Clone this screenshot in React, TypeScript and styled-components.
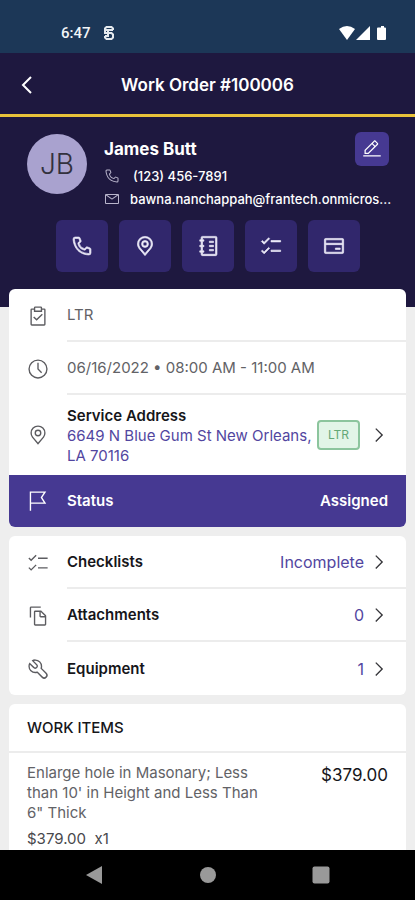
import React, { ReactNode } from "react";
import styled, { createGlobalStyle, css } from "styled-components";

const GlobalStyle = createGlobalStyle`
  *, *::before, *::after { box-sizing: border-box; }
  body {
    margin: 0;
    background: #eeeeee;
    font-family: Inter, "Liberation Sans", sans-serif;
    color: #16161a;
  }
  button { font: inherit; color: inherit; border: 0; padding: 0; background: none; cursor: pointer; }
  h1, h2, h3, p { margin: 0; }
`;

const ICONS = {
  phone: [
    "M26,29h-.17C6.18,27.87,3.39,11.29,3,6.23A3,3,0,0,1,5.76,3h5.51a2,2,0,0,1,1.86,1.26L14.65,8a2,2,0,0,1-.44,2.16l-2.13,2.15a9.37,9.37,0,0,0,7.58,7.6l2.17-2.15A2,2,0,0,1,24,17.35l3.77,1.51A2,2,0,0,1,29,20.72V26A3,3,0,0,1,26,29ZM6,5A1,1,0,0,0,5,6v.08C5.46,12,8.41,26,25.94,27A1,1,0,0,0,27,26.06V20.72l-3.77-1.51-2.87,2.85L19.88,22C11.18,20.91,10,12.21,10,12.12l-.06-.48,2.84-2.87L11.28,5Z",
  ],
  email: [
    "M28,6H4A2,2,0,0,0,2,8V24a2,2,0,0,0,2,2H28a2,2,0,0,0,2-2V8A2,2,0,0,0,28,6ZM25.8,8,16,14.78,6.2,8ZM4,24V8.91l11.43,7.91a1,1,0,0,0,1.14,0L28,8.91V24Z",
  ],
  edit: [
    "M2 26H30V28H2z",
    "M25.4,9c.8-.8.8-2,0-2.8l-3.6-3.6c-.8-.8-2-.8-2.8,0l-15,15V24h6.4L25.4,9zM20.4,4L24,7.6l-3,3L17.4,7L20.4,4zM6,22v-3.6l10-10l3.6,3.6l-10,10H6z",
  ],
  location: [
    "M16,18a5,5,0,1,1,5-5A5,5,0,0,1,16,18Zm0-8a3,3,0,1,0,3,3A3,3,0,0,0,16,10Z",
    "M16,30,7.5645,20.0513c-.0479-.0571-.3482-.4515-.3482-.4515A10.8888,10.8888,0,0,1,5,13a11,11,0,0,1,22,0,10.8844,10.8844,0,0,1-2.2148,6.5973l-.0015.0025s-.3.3944-.3447.4474ZM8.8125,18.395c.001.0007.2334.3082.2866.3744L16,26.9079l6.91-8.15c.0439-.0552.2783-.3649.2788-.3657A8.901,8.901,0,0,0,25,13,9,9,0,1,0,7,13a8.9054,8.9054,0,0,0,1.8125,5.395Z",
  ],
  notebook: [
    "M18 9H24V11H18zM18 15H24V17H18zM18 21H24V23H18z",
    "M27,2H8A2,2,0,0,0,6,4V7H4V9H6v6H4v2H6v6H4v2H6v3a2,2,0,0,0,2,2H27a2,2,0,0,0,2-2V4A2,2,0,0,0,27,2Zm0,26H8V25h2V23H8V17h2V15H8V9h2V7H8V4H27Z",
  ],
  checklist: [
    "M16 8h14v2H16zM6 10.59 3.41 8 2 9.41 6 13.41 14 5.41 12.59 4zM16 22h14v2H16zM6 24.59 3.41 22 2 23.41 6 27.41 14 19.41 12.59 18z",
  ],
  card: [
    "M28,5H4A2,2,0,0,0,2,7V25a2,2,0,0,0,2,2H28a2,2,0,0,0,2-2V7A2,2,0,0,0,28,5Zm0,2v5H4V7ZM4,25V14H28V25Z",
    "M18 19h7v2H18z",
  ],
  task: [
    "M14 20.18 10.41 16.59 9 18 14 23 23 14 21.59 12.58z",
    "M25,5H22V4a2,2,0,0,0-2-2H12a2,2,0,0,0-2,2V5H7A2,2,0,0,0,5,7V28a2,2,0,0,0,2,2H25a2,2,0,0,0,2-2V7A2,2,0,0,0,25,5ZM12,4h8V8H12ZM25,28H7V7h3v3H22V7h3Z",
  ],
  time: [
    "M16,30A14,14,0,1,1,30,16,14,14,0,0,1,16,30ZM16,4A12,12,0,1,0,28,16,12,12,0,0,0,16,4Z",
    "M20.59 22 15 16.41 15 7 17 7 17 15.58 22 20.59z",
  ],
  flag: ["M6,30H4V2H28l-5.8,9L28,20H6ZM6,18H24.33L19.8,11l4.53-7H6Z"],
  files: [
    "M27.4,14.7l-6.1-6.1C21,8.2,20.5,8,20,8h-8c-1.1,0-2,.9-2,2v18c0,1.1.9,2,2,2h14c1.1,0,2-.9,2-2V16.1C28,15.6,27.8,15.1,27.4,14.7zM20,10l5.9,6H20V10zM12,28V10h6v6c0,1.1.9,2,2,2h6v10H12z",
    "M6,18H4V4c0-1.1.9-2,2-2h14v2H6V18z",
  ],
  wrench: [
    "M12.1,2a9.8,9.8,0,0,0-5.4,1.6l6.4,6.4a2.1,2.1,0,0,1,.2,3,2.1,2.1,0,0,1-3-.2L3.7,6.4A9.84,9.84,0,0,0,2,12.1,10.14,10.14,0,0,0,12.1,22.2a10.9,10.9,0,0,0,2.6-.3l6.7,6.7a5,5,0,0,0,7.1-7.1l-6.7-6.7a10.9,10.9,0,0,0,.3-2.6A10,10,0,0,0,12.1,2Zm8,10.1a7.61,7.61,0,0,1-.3,2.1l-.3,1.1.8.8,6.7,6.7a2.88,2.88,0,0,1,.9,2.1A2.72,2.72,0,0,1,27,27a2.9,2.9,0,0,1-4.2,0l-6.7-6.7-.8-.8-1.1.3a7.61,7.61,0,0,1-2.1.3,8.27,8.27,0,0,1-5.7-2.3A7.63,7.63,0,0,1,4,12.1a8.33,8.33,0,0,1,.3-2.2l4.4,4.4a4.14,4.14,0,0,0,5.9.2,4.14,4.14,0,0,0-.2-5.9L10,4.2a6.45,6.45,0,0,1,2-.3,8.27,8.27,0,0,1,5.7,2.3A8.49,8.49,0,0,1,20.1,12.1Z",
  ],
  chevron: ["M22 16 12 26 10.6 24.6 19.2 16 10.6 7.4 12 6z"],
};

type IconName = keyof typeof ICONS;

const Glyph = styled.svg<{ $size: number; $bold?: boolean }>`
  display: block;
  flex: none;
  width: ${(p) => p.$size}px;
  height: ${(p) => p.$size}px;
  fill: currentColor;
  ${(p) => p.$bold && css`stroke: currentColor; stroke-width: 1;`}
`;

const Icon = ({ name, size = 22, bold }: { name: IconName; size?: number; bold?: boolean }) => (
  <Glyph $size={size} $bold={bold} viewBox="0 0 32 32" aria-hidden="true">
    {ICONS[name].map((d) => (
      <path key={d} d={d} />
    ))}
  </Glyph>
);

const Screen = styled.div`
  display: flex;
  flex-direction: column;
  height: 100vh;
  overflow: hidden;
`;

const StatusBar = styled.div`
  flex: none;
  display: flex;
  align-items: center;
  gap: 12px;
  height: 53px;
  padding: 12px 27px 0 61px;
  background: #1c3757;
  color: #f2f5f8;
  font: 500 15px/20px Roboto, sans-serif;
`;

const SystemIcons = styled.svg`
  display: block;
  width: 49px;
  height: 16px;
  margin-left: auto;
  fill: #fff;
`;

const DebugMark = styled.svg`
  display: block;
  width: 12px;
  height: 16px;
  fill: none;
  stroke: #e4e9ee;
  stroke-width: 2;
`;

const TitleBar = styled.header`
  flex: none;
  display: grid;
  grid-template-columns: 56px 1fr 56px;
  align-items: center;
  height: 64px;
  padding-top: 3px;
  background: #1e183f;
  border-bottom: 3px solid #e8c23a;
  color: #fff;
`;

const BackButton = styled.button`
  display: flex;
  justify-content: center;
  padding-right: 3px;
  svg { width: 12px; height: 18px; fill: none; stroke: currentColor; stroke-width: 2; }
`;

const Title = styled.h1`
  font-size: 17px;
  line-height: 24px;
  font-weight: 600;
  text-align: center;
`;

const Content = styled.main`
  flex: 1;
  min-height: 0;
  overflow: hidden;
`;

const Hero = styled.section`
  padding: 17px 26px 35px 27px;
  background: #1e183f;
  color: #fff;
`;

const Contact = styled.div`
  display: grid;
  grid-template-columns: 60px 1fr;
  column-gap: 17px;
`;

const Avatar = styled.div`
  display: grid;
  place-items: center;
  width: 60px;
  height: 60px;
  border-radius: 50%;
  background: #a9a2cf;
  color: #33313d;
  font-size: 28px;
  font-weight: 300;
`;

const ContactInfo = styled.div`
  min-width: 0;
`;

const NameRow = styled.div`
  display: flex;
  justify-content: space-between;
  align-items: center;
  height: 30px;
`;

const Name = styled.h2`
  font-size: 17px;
  line-height: 24px;
  font-weight: 700;
`;

const EditButton = styled.button`
  display: grid;
  place-items: center;
  width: 34px;
  height: 34px;
  border-radius: 6px;
  background: #463992;
`;

const ContactLine = styled.div<{ $gap: number }>`
  display: grid;
  grid-template-columns: 16px 1fr;
  align-items: center;
  column-gap: ${(p) => p.$gap}px;
  height: 23px;
  font-size: 13px;
  line-height: 20px;
  font-weight: 500;
  svg { color: #b9b5cc; }
`;

const ContactText = styled.span`
  white-space: nowrap;
`;

const Actions = styled.div`
  display: flex;
  justify-content: center;
  gap: 11px;
  margin-top: 10px;
`;

const ActionButton = styled.button`
  display: grid;
  place-items: center;
  width: 52px;
  height: 52px;
  border-radius: 6px;
  background: #31276c;
  color: #eceaf8;
`;

const Cards = styled.div`
  display: flex;
  flex-direction: column;
  gap: 9px;
  margin-top: -18px;
  padding: 0 9px;
`;

const Card = styled.section`
  border-radius: 6px;
  background: #fff;
  overflow: hidden;
`;

const Row = styled.div<{ $tall?: boolean; $status?: boolean }>`
  display: grid;
  grid-template-columns: 58px 1fr;
  align-items: center;
  height: ${(p) => (p.$tall ? 80 : 53)}px;
  color: #16161a;
  ${(p) => p.$status && css`
    height: 52px;
    background: #463992;
    color: #fff;
  `}
`;

const RowIcon = styled.span<{ $light?: boolean }>`
  padding-left: 18px;
  color: ${(p) => (p.$light ? "#fff" : "#5c5c60")};
`;

const RowBody = styled.div<{ $divided?: boolean }>`
  display: flex;
  align-items: center;
  height: 100%;
  padding-right: 18px;
  border-bottom: ${(p) => (p.$divided ? "2px solid #ececec" : "0")};
`;

const RowText = styled.span`
  font-size: 15px;
  line-height: 20px;
  color: #626266;
`;

const RowLabel = styled.span`
  flex: 1;
  font-size: 15px;
  line-height: 20px;
  font-weight: 600;
`;

const RowValue = styled.span`
  font-size: 16px;
  line-height: 20px;
  color: #5246a0;
`;

const StatusValue = styled.span`
  font-size: 15px;
  line-height: 20px;
  font-weight: 600;
`;

const ChevronButton = styled.button`
  margin-right: -2px;
  padding-left: 4px;
  color: #38383c;
`;

const Address = styled.div`
  flex: 1;
  min-width: 0;
  white-space: nowrap;
`;

const AddressLine = styled.p`
  font-size: 15px;
  line-height: 20px;
  color: #5246a0;
`;

const Tag = styled.span`
  flex: none;
  margin-right: 4px;
  padding: 3px 9px;
  border: 2px solid #8cc59d;
  border-radius: 4px;
  background: #e2f5e7;
  color: #64a877;
  font-size: 12px;
  line-height: 20px;
`;

const CardTitle = styled.h3`
  padding: 14px 18px 13px;
  border-bottom: 2px solid #ececec;
  font-size: 15px;
  line-height: 20px;
  font-weight: 500;
`;

const WorkItem = styled.div`
  display: flex;
  justify-content: space-between;
  padding: 10px 18px;
`;

const ItemDetails = styled.div`
  width: 250px;
  font-size: 15px;
  line-height: 20px;
  color: #626266;
`;

const ItemQuantity = styled.p`
  margin-top: 6px;
  color: #48484c;
  white-space: pre;
`;

const ItemTotal = styled.span`
  font-size: 17px;
  line-height: 24px;
`;

const NavBar = styled.nav`
  flex: none;
  display: flex;
  justify-content: space-between;
  align-items: center;
  height: 50px;
  padding: 0 85px;
  background: #000;
  svg { display: block; width: 18px; height: 18px; fill: #999; }
`;

const actions: { name: IconName; label: string }[] = [
  { name: "phone", label: "Call" },
  { name: "location", label: "Map" },
  { name: "notebook", label: "Notes" },
  { name: "checklist", label: "Checklists" },
  { name: "card", label: "Payment" },
];

const links: { icon: IconName; label: string; value: string }[] = [
  { icon: "checklist", label: "Checklists", value: "Incomplete" },
  { icon: "files", label: "Attachments", value: "0" },
  { icon: "wrench", label: "Equipment", value: "1" },
];

const InfoRow = ({ icon, divided, tall, children }: { icon: IconName; divided?: boolean; tall?: boolean; children: ReactNode }) => (
  <Row $tall={tall}>
    <RowIcon><Icon name={icon} /></RowIcon>
    <RowBody $divided={divided}>{children}</RowBody>
  </Row>
);

export default function App() {
  return (
    <>
      <GlobalStyle />
      <Screen>
        <StatusBar>
          <span>6:47</span>
          <DebugMark viewBox="0 0 12 16" aria-hidden="true">
            <path d="M10 5V3.5L8.5 2H3.5L2 3.5V8H8.5L10 9.5V12.5L8.5 14H3.500L2 12.500V11M2 5H10M5 5V11H2" />
          </DebugMark>
          <SystemIcons viewBox="0 0 49 16" aria-hidden="true">
            <path d="M0 4Q8 -2 16 4L8 15z" />
            <path d="M31 1V15H17z" />
            <path d="M40 2.500H42V1H45V2.500H46Q47 2.500 47 3.500V14Q47 15 46 15H39Q38 15 38 14V3.500Q38 2.500 39 2.500z" />
          </SystemIcons>
        </StatusBar>
        <TitleBar>
          <BackButton aria-label="Back">
            <svg viewBox="0 0 12 18" aria-hidden="true"><path d="M10 1 2 9l8 8" /></svg>
          </BackButton>
          <Title>Work Order #100006</Title>
        </TitleBar>
        <Content>
          <Hero>
            <Contact>
              <Avatar>JB</Avatar>
              <ContactInfo>
                <NameRow>
                  <Name>James Butt</Name>
                  <EditButton aria-label="Edit"><Icon name="edit" size={20} /></EditButton>
                </NameRow>
                <ContactLine $gap={13}>
                  <Icon name="phone" size={16} />
                  <ContactText>(123) 456-7891</ContactText>
                </ContactLine>
                <ContactLine $gap={10}>
                  <Icon name="email" size={16} />
                  <ContactText>bawna.nanchappah@frantech.onmicros...</ContactText>
                </ContactLine>
              </ContactInfo>
            </Contact>
            <Actions>
              {actions.map((a) => (
                <ActionButton key={a.name} aria-label={a.label}>
                  <Icon name={a.name} bold />
                </ActionButton>
              ))}
            </Actions>
          </Hero>
          <Cards>
            <Card>
              <InfoRow icon="task" divided><RowText>LTR</RowText></InfoRow>
              <InfoRow icon="time" divided><RowText>06/16/2022 • 08:00 AM - 11:00 AM</RowText></InfoRow>
              <InfoRow icon="location" tall>
                <Address>
                  <RowLabel>Service Address</RowLabel>
                  <AddressLine>6649 N Blue Gum St New Orleans,<br />LA 70116</AddressLine>
                </Address>
                <Tag>LTR</Tag>
                <ChevronButton aria-label="Open address"><Icon name="chevron" /></ChevronButton>
              </InfoRow>
              <Row $status>
                <RowIcon $light><Icon name="flag" /></RowIcon>
                <RowBody>
                  <RowLabel>Status</RowLabel>
                  <StatusValue>Assigned</StatusValue>
                </RowBody>
              </Row>
            </Card>
            <Card>
              {links.map((l, i) => (
                <InfoRow key={l.label} icon={l.icon} divided={i < links.length - 1}>
                  <RowLabel>{l.label}</RowLabel>
                  <RowValue>{l.value}</RowValue>
                  <ChevronButton aria-label={`Open ${l.label}`}><Icon name="chevron" /></ChevronButton>
                </InfoRow>
              ))}
            </Card>
            <Card>
              <CardTitle>WORK ITEMS</CardTitle>
              <WorkItem>
                <ItemDetails>
                  <p>Enlarge hole in Masonary; Less than 10' in Height and Less Than 6" Thick</p>
                  <ItemQuantity>{"$379.00  x1"}</ItemQuantity>
                </ItemDetails>
                <ItemTotal>$379.00</ItemTotal>
              </WorkItem>
            </Card>
          </Cards>
        </Content>
        <NavBar>
          <button aria-label="Back"><svg viewBox="0 0 18 18"><path d="M1 9 17 0V18z" /></svg></button>
          <button aria-label="Home"><svg viewBox="0 0 18 18"><circle cx="9" cy="9" r="8" /></svg></button>
          <button aria-label="Recent apps"><svg viewBox="0 0 18 18"><rect width="17" height="17" x=".5" y=".5" rx="2" /></svg></button>
        </NavBar>
      </Screen>
    </>
  );
}
